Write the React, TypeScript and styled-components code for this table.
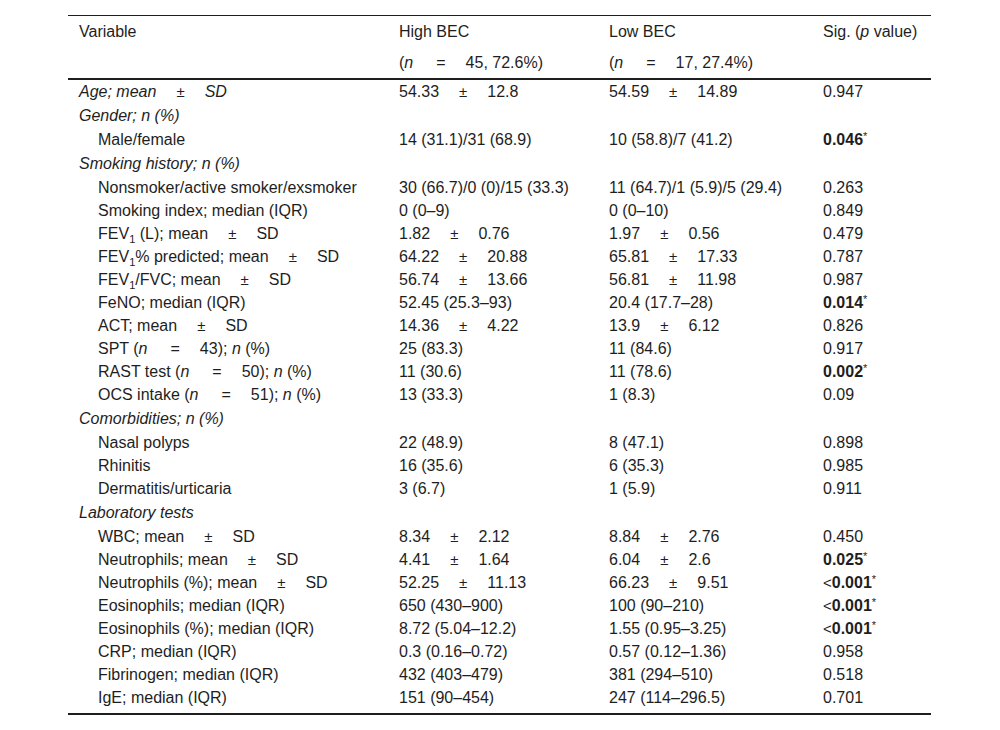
import React from 'react';
import styled, { createGlobalStyle } from 'styled-components';

const GlobalStyle = createGlobalStyle`
  html, body {
    margin: 0;
    background: #ffffff;
  }
  body {
    font-family: 'Liberation Sans', Arial, Helvetica, sans-serif;
  }
`;

const Page = styled.div`
  padding: 15px 0 0 68px;
`;

const Table = styled.div`
  width: 863px;
  color: #1e1e1e;
  font-size: 16px;
  line-height: 18px;
`;

const Head = styled.div`
  border-top: 1px solid #1e1e1e;
  border-bottom: 2px solid #1e1e1e;
`;

const Body = styled.div`
  padding-bottom: 4px;
  border-bottom: 2px solid #1e1e1e;
`;

const Row = styled.div<{ $h: number }>`
  display: grid;
  grid-template-columns: 320px 210px 214px 1fr;
  align-items: center;
  height: ${(p) => p.$h}px;
`;

const Cell = styled.div<{ $italic?: boolean; $indent?: boolean }>`
  padding-left: ${(p) => (p.$indent ? 30 : 11)}px;
  white-space: nowrap;
  font-style: ${(p) => (p.$italic ? 'italic' : 'normal')};
`;

const I = styled.i`
  font-style: italic;
`;

const B = styled.b`
  font-weight: bold;
`;

const Pm = styled.span`
  font-size: 15px;
  margin: 0 20px 0 20px;
`;

const Eq = styled.span`
  margin: 0 20px 0 23px;
`;

const Sub = styled.sub`
  font-size: 11px;
  vertical-align: -4px;
  line-height: 0;
`;

const Star = styled.sup`
  font-size: 11px;
  vertical-align: 5px;
  line-height: 0;
  font-weight: normal;
`;

const Lt = styled.span`
  font-size: 15px;
`;

type RowKind = 'top' | 'cat' | 'item';

type Row = {
  kind: RowKind;
  label: React.ReactNode;
  high?: React.ReactNode;
  low?: React.ReactNode;
  sig?: React.ReactNode;
};

const MeanSd = ({ a, b }: { a: string; b: string }) => (
  <>
    {a}
    <Pm>±</Pm>
    {b}
  </>
);

const N = ({ value }: { value: string }) => (
  <>
    (<I>n</I>
    <Eq>=</Eq>
    {value}
  </>
);

const Fev = () => (
  <>
    FEV<Sub>1</Sub>
  </>
);

const P = ({ value, lt }: { value: string; lt?: boolean }) => (
  <>
    {lt && <Lt>&lt;</Lt>}
    <B>{value}</B>
    <Star>*</Star>
  </>
);

const rows: Row[] = [
  { kind: 'top', label: <>Age; mean<Pm>±</Pm>SD</>, high: <MeanSd a="54.33" b="12.8" />, low: <MeanSd a="54.59" b="14.89" />, sig: '0.947' },
  { kind: 'cat', label: <>Gender; n (%)</> },
  { kind: 'item', label: 'Male/female', high: '14 (31.1)/31 (68.9)', low: '10 (58.8)/7 (41.2)', sig: <P value="0.046" /> },
  { kind: 'cat', label: <>Smoking history; n (%)</> },
  { kind: 'item', label: 'Nonsmoker/active smoker/exsmoker', high: '30 (66.7)/0 (0)/15 (33.3)', low: '11 (64.7)/1 (5.9)/5 (29.4)', sig: '0.263' },
  { kind: 'item', label: 'Smoking index; median (IQR)', high: '0 (0–9)', low: '0 (0–10)', sig: '0.849' },
  { kind: 'item', label: <><Fev /> (L); mean<Pm>±</Pm>SD</>, high: <MeanSd a="1.82" b="0.76" />, low: <MeanSd a="1.97" b="0.56" />, sig: '0.479' },
  { kind: 'item', label: <><Fev />% predicted; mean<Pm>±</Pm>SD</>, high: <MeanSd a="64.22" b="20.88" />, low: <MeanSd a="65.81" b="17.33" />, sig: '0.787' },
  { kind: 'item', label: <><Fev />/FVC; mean<Pm>±</Pm>SD</>, high: <MeanSd a="56.74" b="13.66" />, low: <MeanSd a="56.81" b="11.98" />, sig: '0.987' },
  { kind: 'item', label: 'FeNO; median (IQR)', high: '52.45 (25.3–93)', low: '20.4 (17.7–28)', sig: <P value="0.014" /> },
  { kind: 'item', label: <>ACT; mean<Pm>±</Pm>SD</>, high: <MeanSd a="14.36" b="4.22" />, low: <MeanSd a="13.9" b="6.12" />, sig: '0.826' },
  { kind: 'item', label: <>SPT <N value="43" />); <I>n</I> (%)</>, high: '25 (83.3)', low: '11 (84.6)', sig: '0.917' },
  { kind: 'item', label: <>RAST test <N value="50" />); <I>n</I> (%)</>, high: '11 (30.6)', low: '11 (78.6)', sig: <P value="0.002" /> },
  { kind: 'item', label: <>OCS intake <N value="51" />); <I>n</I> (%)</>, high: '13 (33.3)', low: '1 (8.3)', sig: '0.09' },
  { kind: 'cat', label: <>Comorbidities; n (%)</> },
  { kind: 'item', label: 'Nasal polyps', high: '22 (48.9)', low: '8 (47.1)', sig: '0.898' },
  { kind: 'item', label: 'Rhinitis', high: '16 (35.6)', low: '6 (35.3)', sig: '0.985' },
  { kind: 'item', label: 'Dermatitis/urticaria', high: '3 (6.7)', low: '1 (5.9)', sig: '0.911' },
  { kind: 'cat', label: 'Laboratory tests' },
  { kind: 'item', label: <>WBC; mean<Pm>±</Pm>SD</>, high: <MeanSd a="8.34" b="2.12" />, low: <MeanSd a="8.84" b="2.76" />, sig: '0.450' },
  { kind: 'item', label: <>Neutrophils; mean<Pm>±</Pm>SD</>, high: <MeanSd a="4.41" b="1.64" />, low: <MeanSd a="6.04" b="2.6" />, sig: <P value="0.025" /> },
  { kind: 'item', label: <>Neutrophils (%); mean<Pm>±</Pm>SD</>, high: <MeanSd a="52.25" b="11.13" />, low: <MeanSd a="66.23" b="9.51" />, sig: <P value="0.001" lt /> },
  { kind: 'item', label: 'Eosinophils; median (IQR)', high: '650 (430–900)', low: '100 (90–210)', sig: <P value="0.001" lt /> },
  { kind: 'item', label: 'Eosinophils (%); median (IQR)', high: '8.72 (5.04–12.2)', low: '1.55 (0.95–3.25)', sig: <P value="0.001" lt /> },
  { kind: 'item', label: 'CRP; median (IQR)', high: '0.3 (0.16–0.72)', low: '0.57 (0.12–1.36)', sig: '0.958' },
  { kind: 'item', label: 'Fibrinogen; median (IQR)', high: '432 (403–479)', low: '381 (294–510)', sig: '0.518' },
  { kind: 'item', label: 'IgE; median (IQR)', high: '151 (90–454)', low: '247 (114–296.5)', sig: '0.701' },
];

const App = () => {
  return (
    <Page>
      <GlobalStyle />
      <Table>
        <Head>
          <Row $h={31}>
            <Cell>Variable</Cell>
            <Cell>High BEC</Cell>
            <Cell>Low BEC</Cell>
            <Cell>
              Sig. (<I>p</I> value)
            </Cell>
          </Row>
          <Row $h={31}>
            <Cell />
            <Cell>
              <N value="45, 72.6%" />)
            </Cell>
            <Cell>
              <N value="17, 27.4%" />)
            </Cell>
            <Cell />
          </Row>
        </Head>
        <Body>
          {rows.map((r, i) => (
            <Row key={i} $h={r.kind === 'cat' ? 25 : 23}>
              <Cell $italic={r.kind !== 'item'} $indent={r.kind === 'item'}>
                {r.label}
              </Cell>
              <Cell>{r.high}</Cell>
              <Cell>{r.low}</Cell>
              <Cell>{r.sig}</Cell>
            </Row>
          ))}
        </Body>
      </Table>
    </Page>
  );
};

export default App;
